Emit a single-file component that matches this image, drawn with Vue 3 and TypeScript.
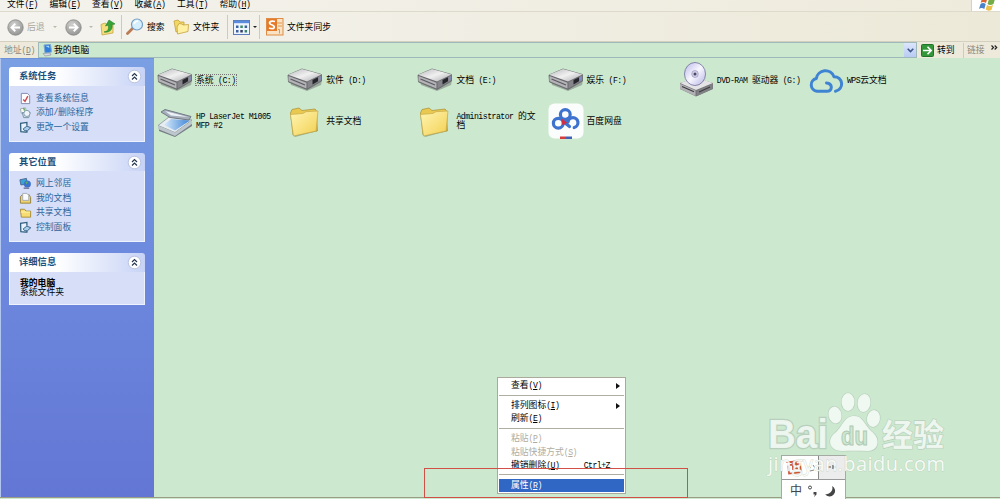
<script setup lang="ts">
import { h } from 'vue'

// Splits a label into wide and narrow runs; "_" marks the accelerator key.
const Txt = (props: { t: string }) =>
  h(
    'span',
    { class: 'txt' },
    (props.t.match(/_[A-Z]|[\x20-\x5e\x60-\x7e]+|[^\x20-\x7e]+/g) ?? []).map((run) =>
      run[0] === '_'
        ? h('u', { class: 'lat' }, run.slice(1))
        : h('span', { class: /[\x20-\x7e]/.test(run[0]) ? 'lat' : 'cjk' }, run),
    ),
  )
Txt.props = ['t']

const menus = ['文件(_F)', '编辑(_E)', '查看(_V)', '收藏(_A)', '工具(_T)', '帮助(_H)']

interface Panel { title: string; kind: string; links: { icon: string; t: string }[] }
const panels: Panel[] = [
  {
    title: '系统任务', kind: 'tasks',
    links: [
      { icon: 'check', t: '查看系统信息' },
      { icon: 'program', t: '添加/删除程序' },
      { icon: 'setting', t: '更改一个设置' },
    ],
  },
  {
    title: '其它位置', kind: 'places',
    links: [
      { icon: 'network', t: '网上邻居' },
      { icon: 'docs', t: '我的文档' },
      { icon: 'shared', t: '共享文档' },
      { icon: 'setting', t: '控制面板' },
    ],
  },
  { title: '详细信息', kind: 'details', links: [] },
]

const items: { icon: string; lines: string[]; focus?: boolean }[] = [
  { icon: 'drive', lines: ['系统 (C:)'], focus: true },
  { icon: 'drive', lines: ['软件 (D:)'] },
  { icon: 'drive', lines: ['文档 (E:)'] },
  { icon: 'drive', lines: ['娱乐 (F:)'] },
  { icon: 'dvd', lines: ['DVD-RAM 驱动器 (G:)'] },
  { icon: 'cloud', lines: ['WPS云文档'] },
  { icon: 'scanner', lines: ['HP LaserJet M1005', 'MFP #2'] },
  { icon: 'folder', lines: ['共享文档'] },
  { icon: 'folder', lines: ['Administrator 的文', '档'] },
  { icon: 'pan', lines: ['百度网盘'] },
]

interface Entry { t: string; arrow?: boolean; off?: boolean; key?: string; hot?: boolean }
const groups: Entry[][] = [
  [{ t: '查看(_V)', arrow: true }],
  [{ t: '排列图标(_I)', arrow: true }, { t: '刷新(_E)' }],
  [{ t: '粘贴(_P)', off: true }, { t: '粘贴快捷方式(_S)', off: true }, { t: '撤销删除(_U)', key: 'Ctrl+Z' }],
  [{ t: '属性(_R)', hot: true }],
]
</script>

<template>
  <div class="window">
    <svg class="defs" width="0" height="0">
      <defs>
        <linearGradient id="gTop" x1="0" y1="0" x2="1" y2="1"><stop offset="0" stop-color="#b9b9bc" /><stop offset=".5" stop-color="#f0f0f1" /><stop offset="1" stop-color="#aaaaae" /></linearGradient>
        <linearGradient id="gFold" x1="0" y1="0" x2="1" y2="1"><stop offset="0" stop-color="#fff6b4" /><stop offset="1" stop-color="#f2cf50" /></linearGradient>
        <linearGradient id="gDisc" x1="0" y1="0" x2="1" y2="1"><stop offset="0" stop-color="#b9b8ea" /><stop offset=".5" stop-color="#f8f7ff" /><stop offset="1" stop-color="#b5b3e4" /></linearGradient>
        <linearGradient id="gGlass" x1="0" y1="0" x2="1" y2="0"><stop offset="0" stop-color="#d7eafa" /><stop offset="1" stop-color="#3c84d6" /></linearGradient>
        <radialGradient id="gBall" cx=".4" cy=".3" r=".8"><stop offset="0" stop-color="#cfcfcd" /><stop offset="1" stop-color="#8f8f8f" /></radialGradient>

        <symbol id="drive" viewBox="0 0 36 36">
          <path d="M3 19 L20 26 L35 19 L34 24 L20 30 L4 24Z" fill="#777c78" opacity=".55" />
          <path d="M1 14 L15 8 L34.500 13.500 V20 L20 28.500 L1.500 21Z" fill="#67676b" stroke="#66696a" stroke-width=".8" />
          <path d="M1 13.800 L15 8 L34.500 13.500 L20 20.500Z" fill="url(#gTop)" />
          <path d="M1.500 15 L19.500 21.700 V27.500 L1.500 20.300Z" fill="#b4b4b8" />
          <path d="M3.500 18 L18 24" stroke="#5b5b60" stroke-width="1.300" />
          <path d="M20.500 21 L34 14.500 V19.700 L20.500 27.500Z" fill="#85858b" />
          <path d="M25.500 19 L31 16.300 V20.300 L25.500 23.500Z" fill="#25262b" /><path d="M32 16 L33.700 15.200 V19 L32 20Z" fill="#8389c8" />
        </symbol>
        <symbol id="dvd" viewBox="0 0 36 36">
          <path d="M1 22 L17 17 L34 22 V28 L17 35.500 L1 28Z" fill="#77777a" />
          <path d="M1 22 L17 16.500 L34 22 L17 29Z" fill="#e4e4e6" />
          <path d="M1 22.800 L16.500 29.500 V35 L1 28Z" fill="#b2b2b6" /><path d="M18 29.700 L33.500 23 V28 L18 35Z" fill="#808185" />
          <path d="M3 25.500 L15 30.700M20 31 L31 26" stroke="#3e3e41" stroke-width="1.200" />
          <ellipse cx="16" cy="13" rx="10.500" ry="11.500" fill="url(#gDisc)" stroke="#7b7aa0" stroke-width=".9" />
          <ellipse cx="16" cy="13" rx="3.300" ry="3.500" fill="#d2d0ed" stroke="#8e8dad" stroke-width=".6" /><circle cx="16" cy="13" r="1.500" fill="#4a4a5c" />
        </symbol>
        <symbol id="cloud" viewBox="0 0 36 36">
          <path d="M18.500 22 Q23.300 22.500 23.300 26.300 Q23 30.300 18.500 30.300 H9 A6.500 6.500 0 0 1 8.300 17.500 A9.200 9.200 0 0 1 26 15.700 A7.300 7.300 0 0 1 27.500 30.200" fill="none" stroke="#3f83d3" stroke-width="3" stroke-linecap="round" stroke-linejoin="round" />
        </symbol>
        <symbol id="scanner" viewBox="0 0 36 36">
          <path d="M2 25 L17 30 L35 20 V23 L18 34 L2 28Z" fill="#747e85" />
          <path d="M1 22.500 L12 14 L35 17 L18 29.500Z" fill="#e8edf1" stroke="#8b949c" stroke-width=".8" />
          <path d="M7 22 L14 16 L33 17.500 L18 27.500Z" fill="url(#gGlass)" />
          <path d="M1 22.800 L18 29.500 L35 18 V21 L18 33 L1 26Z" fill="#bec6cd" />
          <path d="M4 9 L8 6.500 L34 13.500 L32 17 L13 14.500Z" fill="#a5aeba" stroke="#68727d" stroke-width=".9" /><path d="M8 8 L31 14 L14 12.500Z" fill="#edf2f8" />
        </symbol>
        <symbol id="folder" viewBox="0 0 36 36">
          <path d="M6 32 L29 28.500 V13 L31 28 L8 34Z" fill="#80936a" opacity=".6" />
          <path d="M3.500 10 L5 6.500 L12 5 L15 7.500 L28 6 L30 8.500 V28 L6 32Z" fill="#e9c950" stroke="#a88e35" stroke-width=".7" />
          <path d="M3.500 11.500 L16 10.500 L19 8.700 L31 8 L29 28 L6.500 33Z" fill="url(#gFold)" stroke="#c1a544" stroke-width=".6" />
        </symbol>
        <symbol id="pan" viewBox="0 0 36 36">
          <rect x=".5" y=".5" width="35" height="35" rx="6" fill="#fbfdfc" />
          <g fill="none" stroke="#3e72cf" stroke-width="3.200" stroke-linecap="round"><circle cx="17.300" cy="11.500" r="4.900" /><circle cx="10.300" cy="20.200" r="4.900" /><path d="M20 15.500 L16.500 19.500 L21.500 23.500 M20 19 A5 5 0 1 1 26.200 24.500" /></g>
          <path d="M14 16.500 L18.500 19.500 L15 22Z" fill="#d72e3f" stroke="#d72e3f" /><rect x="12" y="33.500" width="6" height="2.500" fill="#d53c3a" /><rect x="18" y="33.500" width="6" height="2.500" fill="#4060b5" />
        </symbol>

        <symbol id="check" viewBox="0 0 14 14"><path d="M2.500 1.500 H9 L11.500 4 V12.500 H2.500Z" fill="#fcfcff" stroke="#7e86aa" /><path d="M4.500 8 L6.500 10 L9.500 4.500" fill="none" stroke="#c94b52" stroke-width="1.500" /></symbol>
        <symbol id="program" viewBox="0 0 14 14"><path d="M1.500 3 L7 2 L8 6 L2.500 8Z" fill="#f5faf1" stroke="#a1a9a6" /><path d="M3.500 7 H12 L10.500 12.500 H5Z" fill="#d8e8e7" stroke="#738fa0" /><circle cx="8.500" cy="8" r="3.300" fill="#eef4fa" stroke="#7e96ab" /><path d="M5 2 L6 5" stroke="#61a55e" stroke-width="1.500" /></symbol>
        <symbol id="setting" viewBox="0 0 14 14"><path d="M7 12 L2 11.500 L1.700 2.500 L8.500 1.500 V5 M8.500 10.500 V12 H6" fill="#e9f3ff" stroke="#32607f" stroke-width="1.400" /><path d="M4.500 8.500 L8.500 5.500 L12.700 7.300 L9 10.500 L6 10.500Z" fill="#a8cfed" stroke="#345f7e" /></symbol>
        <symbol id="network" viewBox="0 0 14 14"><path d="M1 3 L8 1.500 L9 8 L2 8.500Z" fill="#35a5d6" stroke="#4f6591" /><circle cx="9" cy="7.500" r="3.800" fill="#3e72cb" /><path d="M7 5 L10 5 L8 8Z" fill="#58b260" /><path d="M5 12 H11" stroke="#666e9a" stroke-width="1.500" /></symbol>
        <symbol id="docs" viewBox="0 0 14 14"><path d="M1.500 5 L3.500 3 H11 L12.500 6 V12 H1.500Z" fill="#efd36e" stroke="#947f3b" /><path d="M4 1.500 H8.500 L10.500 3.500 V9 H4Z" fill="#fafdff" stroke="#a6abb5" /></symbol>
        <symbol id="shared" viewBox="0 0 14 14"><path d="M1.500 3.500 H6 L7.500 5.500 H12.500 V12 H2.500Z" fill="#f7dc72" stroke="#a68b38" /><path d="M2 6.500 H12" stroke="#fff7b5" /></symbol>
      </defs>
    </svg>

    <header class="menubar">
      <span v-for="m in menus" :key="m" class="menu"><Txt :t="m" /></span>
      <div class="flag">
        <svg width="28" height="12" viewBox="0 0 28 12">
          <path d="M10 -2 Q13 -4 15.500 -2 L14 3 Q11 1 8.700 3Z" fill="#dc6330" /><path d="M17 -1 Q20 1 23 -1 L21.500 4 Q18 6 15.500 4Z" fill="#74ad48" />
          <path d="M8.500 4 Q11 2 13.700 4 L12.300 9 Q9.500 7 7 9Z" fill="#4b83ca" /><path d="M15 5 Q18 7 21 5 L19.500 10 Q16 11.500 13.700 9.500Z" fill="#ecc14b" />
        </svg>
      </div>
    </header>

    <div class="toolbar">
      <div class="tool nav">
        <svg width="17" height="17" viewBox="0 0 17 17"><circle cx="8.500" cy="8.500" r="7.700" fill="url(#gBall)" stroke="#858585" stroke-width=".8" /><path d="M13 8.500 H5 M8.300 4.800 L4.500 8.500 L8.300 12.200" fill="none" stroke="#fff" stroke-width="1.900" /></svg>
        <span class="dim"><Txt t="后退" /></span><i class="caret pale"></i>
      </div>
      <div class="tool fwd">
        <svg width="17" height="17" viewBox="0 0 17 17"><circle cx="8.500" cy="8.500" r="7.700" fill="url(#gBall)" stroke="#858585" stroke-width=".8" /><path d="M4 8.500 H12 M8.700 4.800 L12.500 8.500 L8.700 12.200" fill="none" stroke="#fff" stroke-width="1.900" /></svg>
        <i class="caret pale"></i>
      </div>
      <div class="tool up">
        <svg width="16" height="17" viewBox="0 0 16 17"><path d="M1 5.500 L5 4 L7 5.500 L13 4.500 V14 L2 16Z" fill="#f6de7d" stroke="#c4a64b" stroke-width=".8" /><path d="M4 13 C9 12 9 9 8 6 L5.500 7 L9 1 L15 5 L12 5.500 C13 10 10 14 4 13Z" fill="#37a438" stroke="#22812b" stroke-width=".6" /></svg>
      </div>
      <div class="tool search">
        <svg width="18" height="18" viewBox="0 0 18 18"><path d="M1.500 15.500 L7 10" stroke="#ba7b55" stroke-width="2.800" stroke-linecap="round" /><circle cx="11" cy="6.500" r="5.500" fill="#d5efff" stroke="#749dc4" stroke-width="1.200" /><path d="M8 6 Q9 3 12 3" fill="none" stroke="#fff" stroke-width="1.500" /></svg>
        <Txt t="搜索" />
      </div>
      <div class="tool folders">
        <svg width="17" height="16" viewBox="0 0 17 16"><path d="M1 2 L5 1 L7 3 H11 V10 L3 13Z" fill="#f3d765" stroke="#c4a23d" stroke-width=".8" /><path d="M4 8 L6 4.500 L9 5 L10 6 L15.500 5.500 L15 12.500 L4.500 15Z" fill="#fff0a2" stroke="#c4a23d" stroke-width=".8" /></svg>
        <Txt t="文件夹" />
      </div>
      <div class="tool views">
        <svg width="17" height="15" viewBox="0 0 17 15"><rect x=".5" y=".5" width="16" height="14" fill="#eef5ff" stroke="#5c7db9" /><path d="M1 2 H16" stroke="#5c8bdb" stroke-width="2.400" /><g fill="#3b609f"><rect x="3" y="5.500" width="2.500" height="2.500" /><rect x="7.300" y="5.500" width="2.500" height="2.500" fill="#3a8a62" /><rect x="11.600" y="5.500" width="2.500" height="2.500" /><rect x="3" y="10" width="2.500" height="2.500" /><rect x="7.300" y="10" width="2.500" height="2.500" fill="#333e65" /><rect x="11.600" y="10" width="2.500" height="2.500" fill="#38856c" /></g></svg>
        <i class="caret"></i>
      </div>
      <div class="tool sync">
        <svg width="18" height="18" viewBox="0 0 18 18"><rect x=".5" y=".5" width="16.500" height="16.500" fill="#f9e3c4" stroke="#df8b43" /><path d="M1 1 H11 V13 H1Z" fill="#e57b28" /><path d="M9 3.500 C4 2 2 5 5 6.500 C10 8 9 12 3 10" fill="none" stroke="#fff" stroke-width="1.800" /><path d="M12 11.500 H13.500 V15.500M11 5 H16M12 8 H16" stroke="#dc9850" fill="none" /></svg>
        <Txt t="文件夹同步" />
      </div>
    </div>

    <div class="address">
      <span class="alabel"><Txt t="地址(_D)" /></span>
      <div class="field">
        <svg width="12" height="13" viewBox="0 0 12 13"><path d="M3 1 L9.500 .500 L10.500 8 L4 9Z" fill="#2f7ddd" stroke="#7fa6d0" /><path d="M4.500 2 L8 1.800 L8.300 4Z" fill="#a4dbfb" /><path d="M2 9.500 L9 9 L10 11 L4 12Z" fill="#d8dde4" stroke="#858d9b" stroke-width=".6" /></svg>
        <Txt t="我的电脑" />
        <span class="drop"><svg width="7" height="5" viewBox="0 0 7 5"><path d="M.7 .7 L3.500 3.500 L6.300 .7" fill="none" stroke="#3e5688" stroke-width="1.600" /></svg></span>
      </div>
      <div class="go">
        <svg width="13" height="13" viewBox="0 0 13 13"><rect x=".5" y=".5" width="12" height="12" rx="1" fill="#33963b" stroke="#227329" /><path d="M2 6.500 H10 M6.500 2.800 L10.200 6.500 L6.500 10.200" fill="none" stroke="#fff" stroke-width="1.600" /></svg>
        <Txt t="转到" />
      </div>
      <div class="linkbar"><Txt t="链接" /><svg width="7" height="5" viewBox="0 0 7 5"><path d="M.5 .5 L2.500 2.500 L.5 4.500 M3.700 .5 L5.700 2.500 L3.700 4.500" fill="none" stroke="#222" stroke-width="1.200" /></svg></div>
    </div>

    <main class="body">
      <aside class="side">
        <section v-for="p in panels" :key="p.title" class="panel" :class="p.kind">
          <div class="phead">
            <b><Txt :t="p.title" /></b>
            <svg width="15" height="15" viewBox="0 0 15 15"><circle cx="7.500" cy="7.500" r="6.300" fill="#fff" stroke="#b9c3df" /><path d="M5 7 L7.500 4.500 L10 7 M5 10.500 L7.500 8 L10 10.500" fill="none" stroke="#27374f" stroke-width="1.200" /></svg>
          </div>
          <div class="pbody">
            <div v-for="l in p.links" :key="l.t" class="link">
              <svg width="13" height="13"><use :href="'#' + l.icon" /></svg><Txt :t="l.t" />
            </div>
            <div v-if="p.kind === 'details'" class="info">
              <b><Txt t="我的电脑" /></b>
              <div><Txt t="系统文件夹" /></div>
            </div>
          </div>
        </section>
      </aside>
      <div class="files">
        <div v-for="it in items" :key="it.lines[0]" class="item" :class="it.icon">
          <svg width="36" height="36"><use :href="'#' + it.icon" /></svg>
          <div class="name" :class="{ focus: it.focus }"><div v-for="ln in it.lines" :key="ln"><Txt :t="ln" /></div></div>
        </div>
      </div>
    </main>

    <div class="context">
      <div v-for="(g, i) in groups" :key="i" class="group">
        <div v-for="e in g" :key="e.t" class="entry" :class="{ off: e.off, hot: e.hot }">
          <Txt :t="e.t" />
          <span v-if="e.key" class="key"><Txt :t="e.key" /></span>
          <i v-if="e.arrow" class="arrow"></i>
        </div>
      </div>
    </div>
    <div class="marker"></div>

    <div class="ime">
      <div class="imetop">
        <svg width="36" height="23" viewBox="0 0 36 23"><g fill="none" stroke="#ce5638" stroke-width="1.700" transform="rotate(-6 12 12)"><path d="M5 5.500 H19 M6.500 9 V17 H18.500 V8.500 H8 M11 6 V13 M14.500 6 V13 M10 13 H16" /></g><path d="M27 10 L29 12 M31 9 L33 12 M28 15 L32 14" stroke="#888" /></svg>
        <div class="grey"><svg width="26" height="23" viewBox="0 0 26 23"><path d="M9 11 H12 M14 9 V13 M14 11 H17" stroke="#555" stroke-width="1.200" /></svg></div>
      </div>
      <div class="imebot">
        <span>中</span>
        <svg width="12" height="14" viewBox="0 0 12 14"><circle cx="3" cy="3.500" r="1.500" fill="none" stroke="#444" /><path d="M6.500 8 H9.500 V10.500 L7 13 L8 10.500 H6.500Z" fill="#444" /></svg>
        <svg width="13" height="14" viewBox="0 0 13 14"><path d="M8 2 A5.500 5.500 0 1 1 1 10 A6 6 0 0 0 8 2Z" fill="#444" /></svg>
      </div>
    </div>

    <svg class="mark" width="190" height="90" viewBox="0 0 190 90">
      <g fill="#f3faf4" fill-opacity=".9" stroke="#b7cfbc" stroke-width="1.200" paint-order="stroke">
        <text x="8" y="57" class="bai" textLength="60" lengthAdjust="spacingAndGlyphs">Bai</text>
        <ellipse cx="75" cy="24" rx="6.500" ry="8.500" transform="rotate(-12 75 24)" /><ellipse cx="88" cy="11" rx="6.500" ry="9" /><ellipse cx="104" cy="12" rx="6.500" ry="9" transform="rotate(8 104 12)" /><ellipse cx="113.500" cy="27.500" rx="6.500" ry="8.500" transform="rotate(10 113.500 27.500)" />
        <path d="M94 25 C103 25 104 33 111 40 C122 48 118 60 108 60 C99 59.500 90 59.500 82 60 C70 60 66 49 75 42 C83 35 84 25 94 25Z" />
        <text x="122" y="55" class="jy" textLength="62">经验</text>
      </g>
      <text x="81" y="54" class="du" textLength="27" lengthAdjust="spacingAndGlyphs">du</text>
      <text x="8" y="80" class="url" textLength="177">jingyan.baidu.com</text>
    </svg>
  </div>
</template>

<style>
.txt { white-space: pre; }
.txt .cjk { font-size: 8.8px; }
.txt .lat { font-family: "Liberation Mono", monospace; font-size: 8.2px; letter-spacing: -0.52px; }
.txt u.lat { text-decoration-thickness: 1px; text-underline-offset: 1px; }
.phead .txt .cjk { font-size: 9.3px; }
</style>

<style scoped>
.window { position: relative; width: 1000px; height: 499px; overflow: hidden; background: #cce8cf; color: #000; font-family: "Liberation Sans", "Noto Sans CJK SC", sans-serif; font-size: 8.8px; line-height: 13px; }
.window svg { display: block; flex: none; }
.defs { position: absolute; }
.menubar { display: flex; height: 12px; background: linear-gradient(90deg, #f3f2ec, #eeebdc); border-bottom: 1px solid #dedacb; padding-left: 7px; box-sizing: border-box; }
.menu { width: 42.5px; line-height: 8px; flex: none; }
.flag { margin-left: auto; background: #fff; width: 28px; height: 11px; border-left: 1px solid #d5d2c6; overflow: hidden; }
.toolbar { display: flex; align-items: center; height: 30px; box-sizing: border-box; padding-left: 7px; background: linear-gradient(90deg, #f4f3ee, #ece9d8); border-bottom: 1px solid #d4d0bf; }
.tool { display: flex; align-items: center; height: 24px; box-sizing: border-box; flex: none; padding-top: 1px; }
.dim { color: #aaa89e; margin-left: 3px; }
.nav { width: 58px; }
.fwd { width: 35px; }
.up { width: 22px; border-right: 1px solid #cfcbba; }
.search { padding-left: 4px; gap: 3px; width: 51px; }
.folders { width: 55px; gap: 3px; border-right: 1px solid #cfcbba; }
.views { width: 32px; padding-left: 5px; gap: 3px; border-right: 1px solid #cfcbba; }
.sync { padding-left: 6px; gap: 3px; }
.caret { border: 2px solid transparent; border-top: 2.500px solid #222; border-bottom: 0; }
.caret.pale { border-top-color: #bbb8aa; margin-left: 7px; }
.nav .caret { margin-left: 8px; }
.address { display: flex; height: 16px; background: #edeadb; align-items: center; }
.alabel { width: 38px; padding-left: 4px; box-sizing: border-box; color: #89877d; }
.field { display: flex; align-items: center; width: 879px; height: 16px; box-sizing: border-box; border: 1px solid #9fb9ba; background: #cce8cf; padding-left: 2px; gap: 1px; }
.drop { margin-left: auto; width: 12px; height: 14px; background: linear-gradient(#dce6fc, #b8cbf3); display: grid; place-items: center; }
.go { display: flex; align-items: center; gap: 3px; padding-left: 4px; width: 42px; height: 15px; border-right: 1px solid #d0ccbc; }
.linkbar { display: flex; align-items: center; gap: 6px; padding-left: 3px; color: #88867d; }
.linkbar svg { margin-top: -5px; }
.body { display: flex; height: 440px; box-sizing: border-box; border-bottom: 1px solid #9a9d84; }
.side { width: 154px; height: 439px; box-sizing: border-box; padding: 8px 9px 0 8px; border-left: 1px solid #b2c7ef; border-top: 1px solid #6e93d6; background: linear-gradient(#7a9fe3, #6d8ade 45%, #6376d4); flex: none; }
.panel { margin-bottom: 11px; }
.phead { height: 19px; display: flex; align-items: center; justify-content: space-between; padding: 0 3px 0 10px; border-radius: 3px 3px 0 0; background: linear-gradient(90deg, #fff 35%, #c7d3f6); color: #1b4f7c; }
.pbody { box-sizing: border-box; background: #d6dff7; border: 1px solid #eef2fc; border-top: 0; padding: 5px 9px 0; color: #2d659b; }
.tasks .pbody { height: 56px; }
.places .pbody { height: 71px; padding-top: 5.500px; }
.places .phead { height: 18px; }
.details .pbody { height: 33px; padding-top: 7px; }
.link { display: flex; align-items: center; gap: 4px; height: 14.600px; }
.info { color: #000; line-height: 9px; padding-left: 1px; }
.info b { display: block; }
.files { flex: 1; display: grid; grid-template-columns: repeat(6, 130.200px); grid-auto-rows: 42px; align-content: start; padding: 0 0 0 3px; }
.item { display: flex; align-items: center; gap: 3px; line-height: 9px; }
.item .name { white-space: nowrap; }
.drive .name, .dvd .name, .cloud .name { padding-top: 2px; }
.dvd .name { margin-left: -1px; }
.dvd { padding-left: 1px; }
.item .name.focus { outline: 1px dotted #777; padding: 1px 0 0; margin-top: 1px; }
.context { position: absolute; left: 497px; top: 377px; width: 129px; height: 117px; box-sizing: border-box; background: #fff; border: 1px solid #aaa99b; padding: 1px; }
.group + .group { border-top: 1px solid #b0aea2; margin-top: 2.300px; padding-top: 3.300px; }
.entry { display: flex; align-items: center; height: 13.300px; padding-left: 12px; position: relative; }
.entry.off { color: #b0ad9f; }
.entry.hot { background: #3067c5; color: #fff; }
.key { margin-left: auto; margin-right: 14px; }
.arrow { margin-left: auto; margin-right: 4px; border: 3px solid transparent; border-left: 4px solid #111; border-right: 0; }
.marker { position: absolute; left: 424px; top: 468px; width: 264px; height: 30px; box-sizing: border-box; border: 1px solid #d04f46; }
.ime { position: absolute; left: 781px; top: 455px; width: 65px; height: 44px; box-sizing: border-box; border: 1px solid #a3aba3; border-bottom: 0; background: #fff; }
.imetop { display: flex; height: 23px; border-bottom: 1px solid #999; }
.grey { width: 26px; background: #ececec; border-left: 1px solid #888; }
.imebot { display: flex; align-items: center; gap: 5px; height: 22px; padding-left: 8px; color: #444; font-size: 12px; }
.mark { position: absolute; left: 760px; top: 391px; overflow: visible; }
.bai { font: bold 41px "Liberation Sans", sans-serif; stroke-width: 2.500px; }
.jy { font: bold 31px "Noto Sans CJK SC", sans-serif; }
.du { font: bold 25px "Liberation Sans", sans-serif; fill: #cce8cf; stroke: #afc8b4; stroke-width: 1; }
.url { font: 20px "Open Sans", sans-serif; fill: #fff; fill-opacity: .85; stroke: #b8ccb9; stroke-opacity: .7; stroke-width: .8; paint-order: stroke; }
</style>
